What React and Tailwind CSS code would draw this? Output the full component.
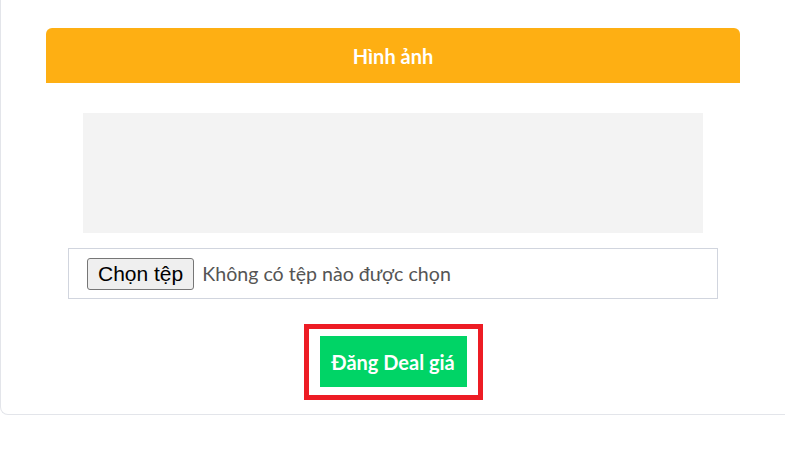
const font = "font-['Lato','Noto_Sans',sans-serif]";

const FakeFileInput = () => (
  <div className="flex h-[51px] items-center gap-2 border border-[#d1d5de] pl-[18px] pt-px">
    <span className="flex h-8 items-center rounded-[3px] border border-[#767676] bg-[#efefef] px-[10px] font-['Liberation_Sans',sans-serif] text-[21px] text-black">
      Chọn tệp
    </span>
    <span className="text-[19.6px] text-[#555]">Không có tệp nào được chọn</span>
  </div>
);

export default function App() {
  return (
    <div className={`min-h-[471px] bg-white ${font}`}>
      <div className="w-[786px] rounded-bl-lg border-b border-l border-[#e3e5ea] pl-[45px] pr-[46px] pt-[28px] pb-[14px]">
        <div className="flex h-[55px] items-center justify-center rounded-t-md bg-[#feaf13]">
          <h2 className="text-[20px] font-bold text-white">Hình ảnh</h2>
        </div>

        <div className="px-[22px] pt-[30px]">
          <div className="mx-[15px] h-[120px] bg-[#f3f3f3]" />
          <div className="mt-[15px]">
            <FakeFileInput />
          </div>
          <div className="mt-[25px] flex justify-center">
            <div className="border-[5px] border-[#ed1c24] px-[11px] pt-[7px] pb-[8px]">
              <button className="flex h-[51px] w-[147px] items-center justify-center bg-[#00d466] text-[20px] font-bold text-white">
                Đăng Deal giá
              </button>
            </div>
          </div>
        </div>
      </div>
    </div>
  );
}
